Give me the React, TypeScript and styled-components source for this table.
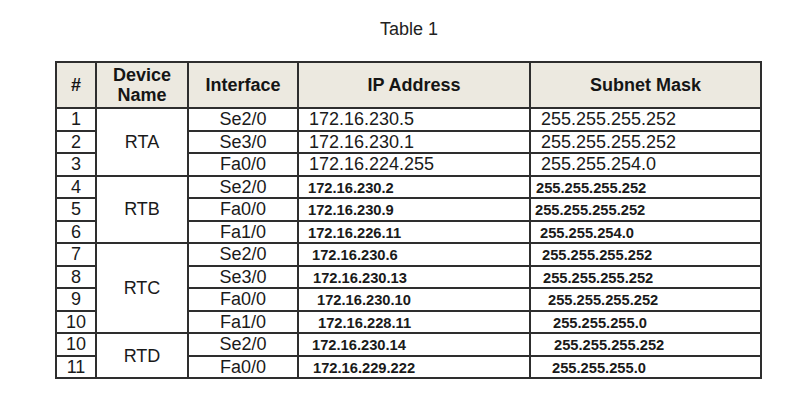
import { createGlobalStyle } from "styled-components";
import styled from "styled-components";

const GlobalStyle = createGlobalStyle`
    body {
        margin: 0;
        background: #ffffff;
        font-family: "Liberation Sans", Arial, sans-serif;
        color: #1a1a1a;
    }
`;

const Page = styled.div`
    padding: 19px 0 0 56px;
    width: 706px;
`;

const Title = styled.div`
    text-align: center;
    font-size: 18px;
    line-height: 21px;
    margin-bottom: 21px;
    color: #222;
`;

const Table = styled.table`
    border-collapse: collapse;
    table-layout: fixed;
    width: 707px;
    margin-left: -1px;
`;

const HeadCell = styled.th`
    background: #ece9e0;
    border: 2px solid #2e2e2e;
    font-size: 18px;
    font-weight: bold;
    line-height: 20px;
    height: 44px;
    padding: 0;
    text-align: center;
    color: #151515;
`;

const Row = styled.tr`
    height: 22.5px;
`;

const Cell = styled.td<{ $align?: "left" | "center"; $indent?: number; $small?: boolean }>`
    border: 2px solid #2e2e2e;
    padding: ${(p) => (p.$small ? "2px 0 0" : "0")};
    padding-left: ${(p) => p.$indent ?? 0}px;
    text-align: ${(p) => p.$align ?? "center"};
    font-size: ${(p) => (p.$small ? "14.7px" : "18px")};
    font-weight: ${(p) => (p.$small ? "bold" : "normal")};
    line-height: 18px;
    vertical-align: middle;
    white-space: nowrap;
    overflow: hidden;
`;

type Line = {
    n: string;
    device?: { name: string; span: number };
    iface: string;
    ip: string;
    mask: string;
    small: boolean;
    ipIndent: number;
    maskIndent: number;
};

const rows: Line[] = [
    { n: "1", device: { name: "RTA", span: 3 }, iface: "Se2/0", ip: "172.16.230.5", mask: "255.255.255.252", small: false, ipIndent: 10, maskIndent: 10 },
    { n: "2", iface: "Se3/0", ip: "172.16.230.1", mask: "255.255.255.252", small: false, ipIndent: 10, maskIndent: 10 },
    { n: "3", iface: "Fa0/0", ip: "172.16.224.255", mask: "255.255.254.0", small: false, ipIndent: 10, maskIndent: 10 },
    { n: "4", device: { name: "RTB", span: 3 }, iface: "Se2/0", ip: "172.16.230.2", mask: "255.255.255.252", small: true, ipIndent: 9, maskIndent: 5 },
    { n: "5", iface: "Fa0/0", ip: "172.16.230.9", mask: "255.255.255.252", small: true, ipIndent: 9, maskIndent: 4 },
    { n: "6", iface: "Fa1/0", ip: "172.16.226.11", mask: "255.255.254.0", small: true, ipIndent: 9, maskIndent: 9 },
    { n: "7", device: { name: "RTC", span: 4 }, iface: "Se2/0", ip: "172.16.230.6", mask: "255.255.255.252", small: true, ipIndent: 13, maskIndent: 11 },
    { n: "8", iface: "Se3/0", ip: "172.16.230.13", mask: "255.255.255.252", small: true, ipIndent: 14, maskIndent: 12 },
    { n: "9", iface: "Fa0/0", ip: "172.16.230.10", mask: "255.255.255.252", small: true, ipIndent: 18, maskIndent: 17 },
    { n: "10", iface: "Fa1/0", ip: "172.16.228.11", mask: "255.255.255.0", small: true, ipIndent: 19, maskIndent: 22 },
    { n: "10", device: { name: "RTD", span: 2 }, iface: "Se2/0", ip: "172.16.230.14", mask: "255.255.255.252", small: true, ipIndent: 13, maskIndent: 23 },
    { n: "11", iface: "Fa0/0", ip: "172.16.229.222", mask: "255.255.255.0", small: true, ipIndent: 14, maskIndent: 21 },
];

export default function App() {
    return (
        <Page>
            <GlobalStyle />
            <Title>Table 1</Title>
            <Table>
                <colgroup>
                    <col style={{ width: 40 }} />
                    <col style={{ width: 92 }} />
                    <col style={{ width: 110 }} />
                    <col style={{ width: 232 }} />
                    <col style={{ width: 231 }} />
                </colgroup>
                <thead>
                    <tr>
                        <HeadCell>#</HeadCell>
                        <HeadCell>
                            Device
                            <br />
                            Name
                        </HeadCell>
                        <HeadCell>Interface</HeadCell>
                        <HeadCell>IP Address</HeadCell>
                        <HeadCell>Subnet Mask</HeadCell>
                    </tr>
                </thead>
                <tbody>
                    {rows.map((r, i) => (
                        <Row key={i}>
                            <Cell>{r.n}</Cell>
                            {r.device && <Cell rowSpan={r.device.span}>{r.device.name}</Cell>}
                            <Cell>{r.iface}</Cell>
                            <Cell $align="left" $indent={r.ipIndent} $small={r.small}>
                                {r.ip}
                            </Cell>
                            <Cell $align="left" $indent={r.maskIndent} $small={r.small}>
                                {r.mask}
                            </Cell>
                        </Row>
                    ))}
                </tbody>
            </Table>
        </Page>
    );
}
